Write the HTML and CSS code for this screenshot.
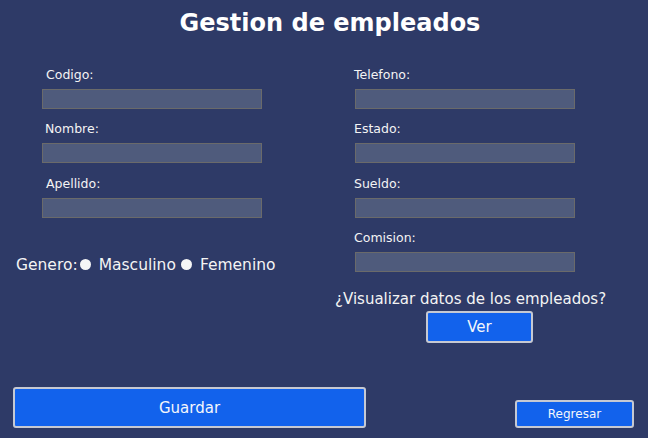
FILE: index.html
```html
<!DOCTYPE html>
<html lang="es">
<head>
<meta charset="utf-8">
<title>Gestion de empleados</title>
<link rel="stylesheet" href="styles.css">
</head>
<body>
<div class="window">
  <h1 class="title">Gestion de empleados</h1>
  <div class="form">
    <div class="col col-left">
      <div class="field"><label class="lbl lbl-left">Codigo:</label><input class="input" type="text"></div>
      <div class="field"><label class="lbl lbl-left2">Nombre:</label><input class="input" type="text"></div>
      <div class="field"><label class="lbl lbl-left">Apellido:</label><input class="input" type="text"></div>
      <div class="genero">
        <span class="g-label">Genero:</span><span class="radio"></span><span class="opt">Masculino</span><span class="radio"></span><span class="opt">Femenino</span>
      </div>
    </div>
    <div class="col col-right">
      <div class="field"><label class="lbl">Telefono:</label><input class="input" type="text"></div>
      <div class="field"><label class="lbl">Estado:</label><input class="input" type="text"></div>
      <div class="field"><label class="lbl">Sueldo:</label><input class="input" type="text"></div>
      <div class="field"><label class="lbl">Comision:</label><input class="input" type="text"></div>
      <p class="question">¿Visualizar datos de los empleados?</p>
      <button class="btn btn-ver">Ver</button>
    </div>
  </div>
  <div class="footer">
    <button class="btn btn-guardar">Guardar</button>
    <button class="btn btn-regresar">Regresar</button>
  </div>
</div>
</body>
</html>
```

FILE: styles.css
```css
html, body {
  margin: 0;
  padding: 0;
}
body {
  background: #2e3a67;
  font-family: "DejaVu Sans", "Liberation Sans", sans-serif;
  color: #f4f4f4;
}
.window {
  width: 648px;
  height: 438px;
  display: flex;
  flex-direction: column;
  box-sizing: border-box;
}
.title {
  margin: 0;
  height: 48px;
  line-height: 47px;
  font-size: 24px;
  font-weight: bold;
  text-align: center;
  padding-left: 12px;
  color: #ffffff;
}
.form {
  display: flex;
  padding-top: 17px;
  padding-left: 42px;
}
.col {
  display: flex;
  flex-direction: column;
  width: 220px;
}
.col-right {
  margin-left: 93px;
}
.field {
  display: flex;
  flex-direction: column;
  margin-bottom: 10.33px;
}
.lbl {
  display: block;
  font-size: 12.5px;
  line-height: 20px;
  margin-bottom: 4px;
  margin-left: -1px;
}
.lbl-left {
  margin-left: 4px;
}
.lbl-left2 {
  margin-left: 3px;
}
.input {
  box-sizing: border-box;
  width: 220px;
  height: 20px;
  margin: 0;
  border: 1px solid #6a6a6a;
  background: #4f5b7c;
  outline: none;
  padding: 0;
}
.genero {
  display: flex;
  align-items: center;
  height: 20px;
  margin-top: 27px;
  margin-left: -26px;
  font-size: 15.5px;
  white-space: nowrap;
}
.radio {
  width: 11px;
  height: 11px;
  border-radius: 50%;
  background: #f6f6f6;
  margin: 0 8px 0 2px;
  flex: none;
}
.opt {
  margin-right: 3px;
}
.question {
  margin: 7px 0 0 -20px;
  font-size: 15px;
  line-height: 20px;
  white-space: nowrap;
}
.btn {
  box-sizing: border-box;
  border: 2px solid #c6c9d3;
  border-radius: 3px;
  background: #1262ec;
  color: #f4f6fb;
  font-family: inherit;
  padding: 0;
  cursor: pointer;
}
.btn-ver {
  margin: 2px 0 0 71px;
  width: 107px;
  height: 32px;
  font-size: 15px;
}
.footer {
  margin-top: auto;
  display: flex;
  align-items: flex-end;
  justify-content: space-between;
  padding: 0 14px 10px 13px;
}
.btn-guardar {
  width: 353px;
  height: 41px;
  font-size: 15px;
}
.btn-regresar {
  width: 119px;
  height: 28px;
  font-size: 12px;
}
```
